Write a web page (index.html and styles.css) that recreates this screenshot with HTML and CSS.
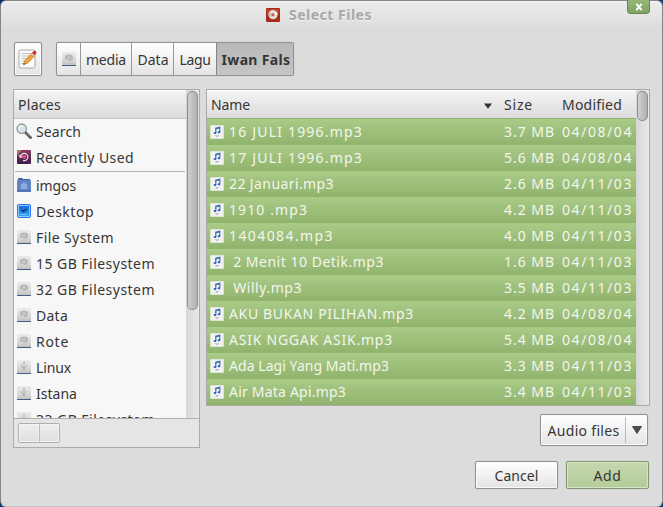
FILE: index.html
```html
<!DOCTYPE html>
<html lang="en">
<head>
<meta charset="utf-8">
<title>Select Files</title>
<link rel="stylesheet" href="styles.css">
</head>
<body>
<svg class="defs" width="0" height="0" aria-hidden="true">
  <defs>
    <linearGradient id="metal" x1="0" y1="0" x2="0" y2="1"><stop offset="0" stop-color="#ececec"/><stop offset="1" stop-color="#cdcdcd"/></linearGradient>
    <linearGradient id="plum" x1="0" y1="0" x2="0" y2="1"><stop offset="0" stop-color="#8a3c62"/><stop offset="1" stop-color="#3a1c4c"/></linearGradient>
    <linearGradient id="sky" x1="0" y1="0" x2="0" y2="1"><stop offset="0" stop-color="#1668dd"/><stop offset="1" stop-color="#35a5f8"/></linearGradient>
    <symbol id="disk" viewBox="0 0 14 14"><path fill="url(#metal)" d="M.3 0h13.400l.3 11H0z"/><path fill="#c6c6c6" d="M0 11h14v2H0z"/><path fill="#405e8c" d="M0 13h14v1H0z"/><ellipse cx="7" cy="5.700" rx="4" ry="3.300" fill="#b8b8b8"/><path d="M5.500 5.500q1.500-1.500 3 0L7 6.500z" fill="#dcdcdc"/><path d="M3.500 8.500l2-1.500 1.500 2z" fill="#d8d8d8"/></symbol>
    <symbol id="usb" viewBox="0 0 14 14"><path fill="url(#metal)" d="M.3 0h13.400l.3 11H0z"/><path fill="#c6c6c6" d="M0 11h14v2H0z"/><path fill="#405e8c" d="M0 13h14v1H0z"/><path d="M7 2v8M4.800 5v2L7 8.500 9.200 6.500V5M6 3l1-1 1 1M6 9.500h2" fill="none" stroke="#aaa" stroke-width=".8"/></symbol>
    <symbol id="song" viewBox="0 0 14 14"><rect x=".3" y=".3" width="13.400" height="13.400" rx="1" fill="#f1f2f1" stroke="#dfe5da" stroke-width=".6"/><path d="M5.800 8V3.300l4-1V7" fill="none" stroke="#2f6cbd" stroke-width="1.100"/><path d="M5.500 4l4.500-1.200" stroke="#2f6cbd" stroke-width="1.100"/><ellipse cx="5" cy="8" rx="1.400" ry="1" fill="#2461b5"/><ellipse cx="9" cy="7.200" rx="1.400" ry="1" fill="#2461b5"/><path d="M5 10.500h4M6 11.500h2" stroke="#b0b0b0" stroke-width=".7"/></symbol>
  </defs>
</svg>
<div class="window">
  <header class="titlebar">
    <svg class="app-icon" width="14" height="14" viewBox="0 0 14 14"><rect width="14" height="14" rx="1" fill="#a92a1b"/><path d="M1 1h12v5H1z" fill="#c0432c"/><circle cx="7" cy="6.700" r="4.600" fill="#e4dcd6"/><path d="M7 6.700L3 4.500a4.600 4.600 0 0 0 0 4.500z" fill="#c9bd9c"/><path d="M7 6.700l3.500-3a4.600 4.600 0 0 1 1 3z" fill="#fff"/><circle cx="7" cy="6.700" r="1.500" fill="#d1584b"/></svg>
    <span class="title" data-w="83">Select Files</span>
    <button class="close" aria-label="Close"><svg width="8" height="8" viewBox="0 0 8 8"><path d="M1.300 .8l5.400 6.400M6.700 .8L1.300 7.200" stroke="#fff" stroke-width="1.900"/></svg></button>
  </header>

  <nav class="toolbar">
    <button class="btn edit" aria-label="Edit path"><svg width="20" height="20" viewBox="0 0 20 20"><rect x="1" y="1" width="16" height="18" rx="1.500" fill="#fafafa" stroke="#aaa"/><path d="M3.500 4.500h9M3.500 7h9M3.500 9.500h7M3.500 12h5M3.500 14.500h4" stroke="#bbb" stroke-width=".9"/><path d="M5.500 15.500l1.200-3.800L14 4l3 2.500-7.500 7.700z" fill="#f0a43a" stroke="#a8681b" stroke-width=".6"/><path d="M13.700 4.200l2-2.200q2-.8 3 1.300l-2 3.200z" fill="#d42a24"/><path d="M12.800 5.200l1.200-1.300 3 2.700-1.200 1.200z" fill="#c9c2b5"/><path d="M5.300 15.800l.5-1.800 1.400 1.200z" fill="#333"/></svg></button>
    <div class="path">
      <span class="crumb root"><svg width="14" height="14"><use href="#disk"/></svg></span>
      <span class="crumb media"><span data-w="40">media</span></span>
      <span class="crumb data"><span data-w="31">Data</span></span>
      <span class="crumb lagu"><span data-w="31">Lagu</span></span>
      <span class="crumb current"><span data-w="69">Iwan Fals</span></span>
    </div>
  </nav>

  <main class="panes">
    <aside class="places">
      <div class="places-view">
        <div class="places-list">
          <div class="head"><span data-w="43">Places</span></div>
          <div class="place"><svg width="16" height="16" viewBox="0 0 16 16"><path d="M9.500 9.500l5 5" stroke="#555" stroke-width="2.800" stroke-linecap="round"/><path d="M10.500 10l3.500 3.500" stroke="#bbb" stroke-width=".7"/><circle cx="5.700" cy="5.700" r="4.700" fill="#d7e4ee" stroke="#929692" stroke-width="1.300"/><path d="M3 5.500q.5-2.500 3-2.500" stroke="#fff" fill="none" stroke-width="1.200"/></svg><span data-w="45">Search</span></div>
          <div class="place"><svg width="16" height="16" viewBox="0 0 16 16"><rect x="1" y="1" width="14" height="14" rx="1" fill="url(#plum)"/><path d="M1 1h5L1 6z" fill="#bd7a55"/><path d="M4.500 7.500a3.700 3.700 0 1 1 2.500 4M3 6l1.500 2.500L7 7" fill="none" stroke="#f0d8e2" stroke-width="1.200"/><circle cx="8.300" cy="8" r="1.900" fill="#e0496a"/></svg><span data-w="98">Recently Used</span></div>
          <div class="rule"></div>
          <div class="place"><svg width="16" height="16" viewBox="0 0 16 16"><path d="M2 2q0-1 1-1h3l1 1h7v4H2z" fill="#3f619c"/><rect x="1" y="3" width="14" height="12" rx="1" fill="#6084c4"/><path d="M8 5l4 3.500h-1V12H5V8.500H4z" fill="#8faadc"/><path d="M1 14h14" stroke="#4769a8"/></svg><span data-w="40">imgos</span></div>
          <div class="place"><svg width="16" height="16" viewBox="0 0 16 16"><rect x="1.500" y="1.500" width="13" height="13" rx="1" fill="url(#sky)" stroke="#2878ed"/><rect x="2.500" y="2.500" width="11" height="11" fill="none" stroke="#a8d5ff" stroke-width=".8"/><path d="M4 4l2.500 3L12 5.500 9.500 8.200 6.500 9.500z" fill="#123c79"/><path d="M4 11.500h7" stroke="#6cc4ff"/></svg><span data-w="58">Desktop</span></div>
          <div class="place"><svg class="small" width="14" height="14"><use href="#disk"/></svg><span data-w="78">File System</span></div>
          <div class="place"><svg class="small" width="14" height="14"><use href="#disk"/></svg><span data-w="119">15 GB Filesystem</span></div>
          <div class="place"><svg class="small" width="14" height="14"><use href="#disk"/></svg><span data-w="119">32 GB Filesystem</span></div>
          <div class="place"><svg class="small" width="14" height="14"><use href="#disk"/></svg><span data-w="32">Data</span></div>
          <div class="place"><svg class="small" width="14" height="14"><use href="#disk"/></svg><span data-w="33">Rote</span></div>
          <div class="place"><svg class="small" width="14" height="14"><use href="#usb"/></svg><span data-w="35">Linux</span></div>
          <div class="place"><svg class="small" width="14" height="14"><use href="#usb"/></svg><span data-w="41">Istana</span></div>
          <div class="place"><svg class="small" width="14" height="14"><use href="#usb"/></svg><span data-w="119">33 GB Filesystem</span></div>
        </div>
        <div class="track"><div class="thumb long"></div></div>
      </div>
      <div class="actions"><div class="pair"><i></i><i></i></div></div>
    </aside>

    <section class="side">
      <div class="files">
        <div class="table">
          <div class="head cols"><span class="name"><span data-w="39">Name</span><svg width="8" height="6" viewBox="0 0 8 6"><path d="M0 .5h8L4 5.800z" fill="#333"/></svg></span><span class="size"><span data-w="29">Size</span></span><span class="date"><span data-w="60">Modified</span></span></div>
          <div class="file"><svg width="14" height="14"><use href="#song"/></svg><span class="name"><span data-w="134">16 JULI 1996.mp3</span></span><span class="size"><span data-w="51">3.7 MB</span></span><span class="date"><span data-w="71">04/08/04</span></span></div>
          <div class="file"><svg width="14" height="14"><use href="#song"/></svg><span class="name"><span data-w="134">17 JULI 1996.mp3</span></span><span class="size"><span data-w="51">5.6 MB</span></span><span class="date"><span data-w="71">04/08/04</span></span></div>
          <div class="file"><svg width="14" height="14"><use href="#song"/></svg><span class="name"><span data-w="105">22 Januari.mp3</span></span><span class="size"><span data-w="51">2.6 MB</span></span><span class="date"><span data-w="71">04/11/03</span></span></div>
          <div class="file"><svg width="14" height="14"><use href="#song"/></svg><span class="name"><span data-w="79">1910 .mp3</span></span><span class="size"><span data-w="51">4.2 MB</span></span><span class="date"><span data-w="71">04/11/03</span></span></div>
          <div class="file"><svg width="14" height="14"><use href="#song"/></svg><span class="name"><span data-w="105">1404084.mp3</span></span><span class="size"><span data-w="51">4.0 MB</span></span><span class="date"><span data-w="71">04/11/03</span></span></div>
          <div class="file"><svg width="14" height="14"><use href="#song"/></svg><span class="name"><span data-w="155"> 2 Menit 10 Detik.mp3</span></span><span class="size"><span data-w="51">1.6 MB</span></span><span class="date"><span data-w="71">04/11/03</span></span></div>
          <div class="file"><svg width="14" height="14"><use href="#song"/></svg><span class="name"><span data-w="73"> Willy.mp3</span></span><span class="size"><span data-w="51">3.5 MB</span></span><span class="date"><span data-w="71">04/11/03</span></span></div>
          <div class="file"><svg width="14" height="14"><use href="#song"/></svg><span class="name"><span data-w="185">AKU BUKAN PILIHAN.mp3</span></span><span class="size"><span data-w="51">4.2 MB</span></span><span class="date"><span data-w="71">04/08/04</span></span></div>
          <div class="file"><svg width="14" height="14"><use href="#song"/></svg><span class="name"><span data-w="164">ASIK NGGAK ASIK.mp3</span></span><span class="size"><span data-w="51">5.4 MB</span></span><span class="date"><span data-w="71">04/08/04</span></span></div>
          <div class="file"><svg width="14" height="14"><use href="#song"/></svg><span class="name"><span data-w="160">Ada Lagi Yang Mati.mp3</span></span><span class="size"><span data-w="51">3.3 MB</span></span><span class="date"><span data-w="71">04/11/03</span></span></div>
          <div class="file"><svg width="14" height="14"><use href="#song"/></svg><span class="name"><span data-w="117">Air Mata Api.mp3</span></span><span class="size"><span data-w="51">3.4 MB</span></span><span class="date"><span data-w="71">04/11/03</span></span></div>
        </div>
        <div class="track"><div class="thumb short"></div></div>
      </div>
      <button class="btn filter"><span data-w="72">Audio files</span><span class="divider"></span><svg width="10" height="8" viewBox="0 0 10 8"><path d="M.5 .5h9L5 7.500z" fill="#4c4c4c" stroke="#333" stroke-width=".8"/></svg></button>
    </section>
  </main>

  <footer class="buttons">
    <button class="btn cancel"><span data-w="44">Cancel</span></button>
    <button class="btn add"><span data-w="28">Add</span></button>
  </footer>
</div>
<script src="fit.js"></script>
</body>
</html>
```
FILE: styles.css
```css
* { box-sizing: border-box; }
html, body { margin: 0; height: 100%; overflow: hidden; }
body {
  background: #0b3272;
  color: #363636;
  font: 14px/20px "Noto Sans", "Open Sans", sans-serif;
}
button { font: inherit; color: inherit; padding: 0; }
svg { display: block; flex: none; }
.defs { position: absolute; }
[data-w] { display: inline-block; white-space: pre; }

.window {
  height: 507px;
  padding: 0 12px;
  border: 1px solid #858585;
  border-bottom-color: #c4c4c4;
  border-radius: 6px;
  background: linear-gradient(#ececec, #dcdcdc 28px);
  box-shadow: inset 0 1px #f4f4f4;
  display: flex;
  flex-direction: column;
}

.titlebar {
  position: relative;
  height: 41px;
  flex: none;
  display: flex;
  align-items: flex-start;
  padding: 4px 0 0 253px;
  gap: 9px;
  font-weight: 700;
  color: #a8a8a8;
  text-shadow: 0 1px #f5f5f5;
}
.app-icon { margin-top: 3px; }
.close {
  position: absolute;
  top: -1px;
  right: 0;
  width: 23px;
  height: 14px;
  border: 1px solid #668850;
  border-top: 0;
  border-radius: 0 0 4px 4px;
  background: linear-gradient(#94b777, #80a364);
  display: flex;
  justify-content: center;
  padding-top: 3px;
}

.toolbar { display: flex; gap: 14px; height: 34px; flex: none; padding-left: 1px; }
.btn {
  border: 1px solid #929292;
  border-radius: 2px;
  background: linear-gradient(#fff, #e4e4e4);
  box-shadow: inset 0 0 0 1px #fafafa, 0 0 1px #aaa;
  display: flex;
  align-items: center;
  justify-content: center;
}
.edit { width: 28px; height: 34px; }
.path {
  display: flex;
  width: 238px;
  height: 34px;
  border: 1px solid #929292;
  border-radius: 2px;
  background: linear-gradient(#fff, #e4e4e4);
  box-shadow: 0 0 1px #aaa;
  overflow: hidden;
}
.crumb {
  display: flex;
  align-items: center;
  justify-content: center;
  border-right: 1px solid #999;
  padding-top: 2px;
}
.root { width: 24px; padding-top: 0; }
.media { width: 51px; }
.data { width: 42px; padding-left: 1px; }
.lagu { width: 43px; border-color: #858585; }
.current { flex: 1; padding-left: 2px; border: 0; background: linear-gradient(#b8b8b8, #c5c5c5); font-weight: 700; }

.panes { display: flex; gap: 6px; margin-top: 13px; }
.places {
  width: 187px;
  height: 359px;
  flex: none;
  border: 1px solid #aaa;
  background: #e5e5e5;
}
.places-view { display: flex; height: 329px; border-bottom: 1px solid #b0b0b0; overflow: hidden; }
.places-list { flex: 1; background: #f7f7f7; overflow: hidden; }
.head {
  height: 29px;
  padding: 5px 4px 0;
  background: linear-gradient(#fff 1px, #f3f3f3 1px, #dcdcdc);
  border-bottom: 1px solid #c8c8c8;
}
.place { display: flex; align-items: center; gap: 4px; height: 26px; padding-left: 2px; }
.place > span { margin-top: -1px; }
.place svg { margin-top: -2px; }
.place .small { margin: -2px 1px 0; }
.rule { height: 1px; margin: 0 1px 1px; background: #b4b4b4; }
.track { width: 13px; flex: none; padding: 1px; background: linear-gradient(90deg, #d6d6d6, #e8e8e8); }
.thumb { border: 1px solid #8d8d8d; border-radius: 5px; background: linear-gradient(90deg, #d0d0d0, #b0b0b0); }
.long { height: 219px; }
.short { height: 30px; }
.actions { padding: 4px; }
.pair { display: flex; width: 42px; height: 20px; border: 1px solid #b0b0b0; border-radius: 2px; background: linear-gradient(#efefef, #dedede); }
.pair i { flex: 1; border: 1px solid #f3f3f3; }
.pair i + i { border-left: 1px solid #b8b8b8; }

.side { display: flex; flex-direction: column; }
.files { display: flex; width: 444px; height: 317px; border: 1px solid #aaa; }
.table { flex: 1; }
.cols, .file { display: flex; }
.name { flex: 1; }
.size { width: 58px; }
.date { width: 74px; }
.head.cols { padding-right: 0; border-bottom-color: #8fae70; }
.cols .name { display: flex; justify-content: space-between; padding-right: 12px; }
.cols svg { margin-top: 8px; }
.file {
  height: 26px;
  align-items: center;
  padding-left: 3px;
  color: #f2f6ee;
  background: linear-gradient(#abcb88, #90b36c);
}
.file svg { margin: -1px 5px 0 0; }
.file > span { margin-top: -1px; }
.filter { align-self: flex-end; width: 108px; height: 32px; margin: 8px 2px 0 0; padding-left: 1px; gap: 5px; }
.divider { width: 1px; height: 26px; background: #b8b8b8; }
.filter svg { margin-left: 1px; }
.filter > span:first-child { padding-top: 1px; }

.buttons { display: flex; justify-content: flex-end; gap: 8px; margin: 13px 1px 0 0; }
.cancel, .add { width: 83px; height: 28px; padding-top: 1px; }
.add {
  border-color: #829772;
  background: linear-gradient(#c5d9b0, #b2cc98);
  box-shadow: inset 0 0 0 1px #d5e4c6, 0 0 1px #aaa;
}
```
FILE: fit.js
```js
document.querySelectorAll('[data-w]').forEach(function (el) {
  var natural = el.getBoundingClientRect().width;
  var spacing = (Number(el.dataset.w) - natural) / el.textContent.length;
  el.style.letterSpacing = spacing.toFixed(3) + 'px';
});
```
